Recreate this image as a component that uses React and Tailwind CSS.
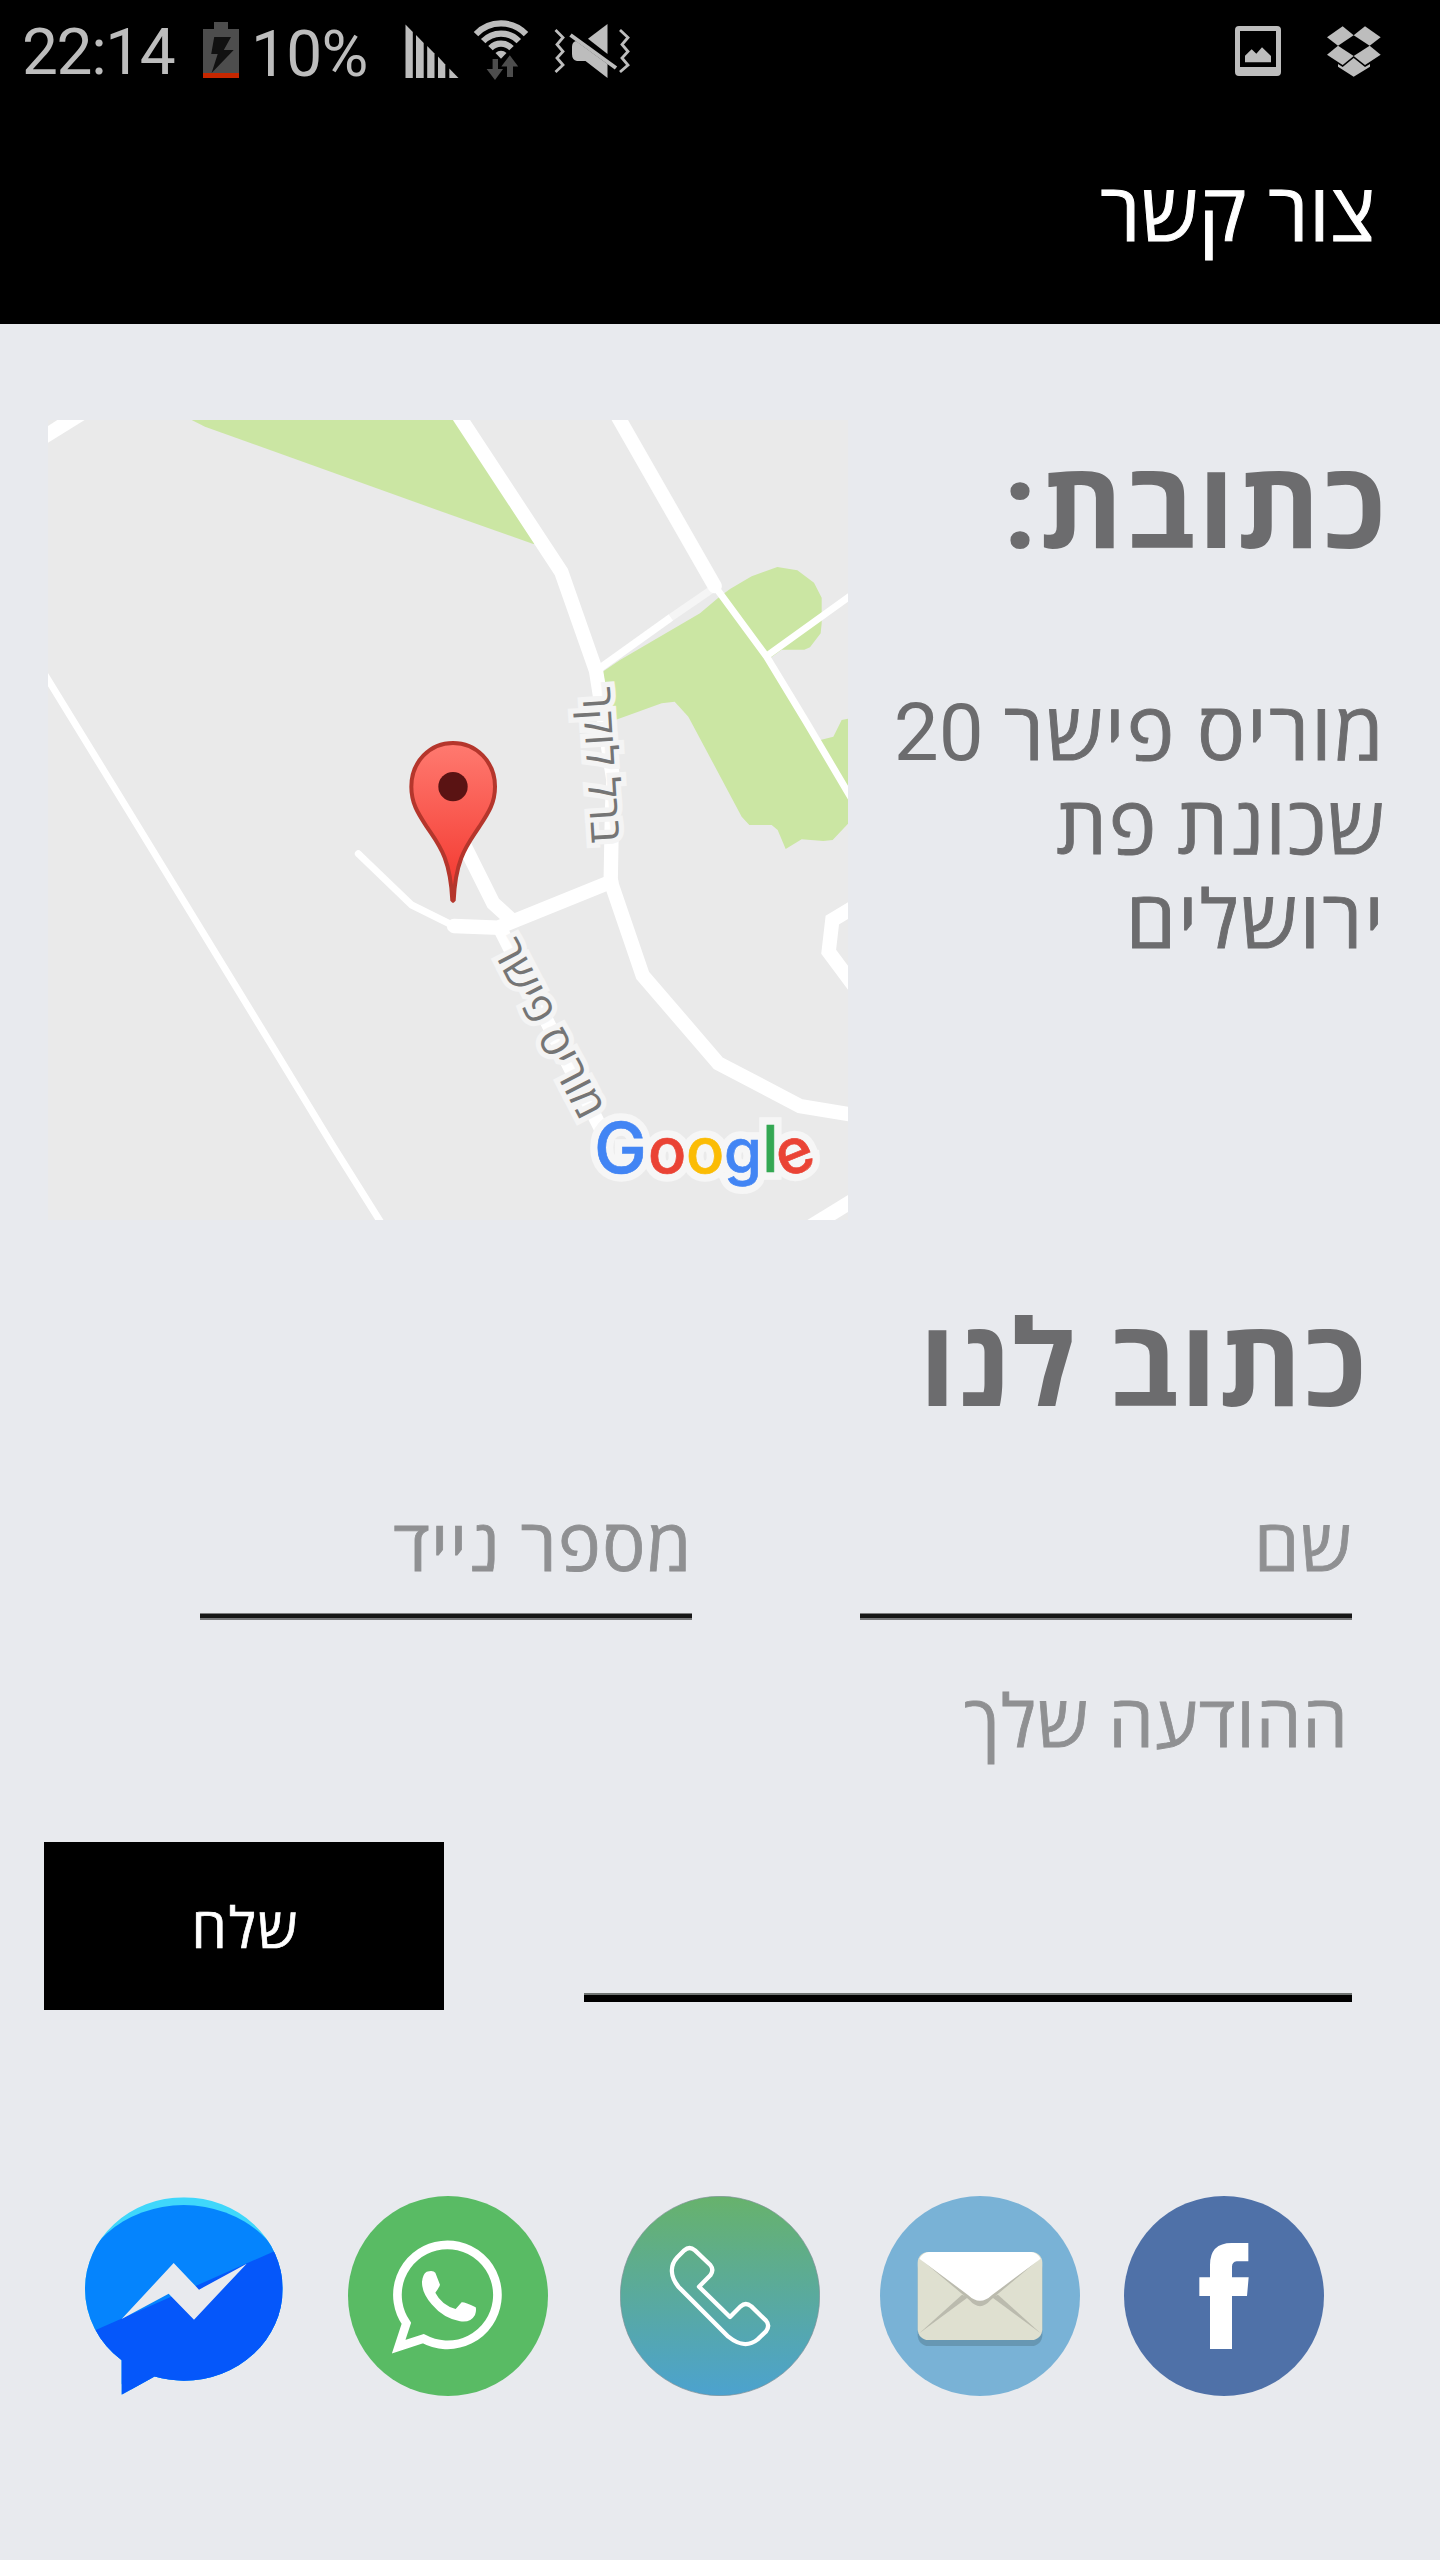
const FONT = "font-['Roboto','Open_Sans',sans-serif]";

function Battery() {
  return (
    <svg className="h-[105px] w-9" viewBox="203 0 36 105">
      <path d="M214 22h14v7h11v49h-36V29h11z" fill="#4d4d4d" />
      <rect x="203" y="73" width="36" height="5" fill="#c62700" />
      <path d="M214.2 37H231L223.8 50H233.7L211.6 73L217.7 54H211.2Z" fill="#111" />
    </svg>
  );
}

function Signal() {
  return (
    <svg className="h-[105px] w-[54px]" viewBox="405 0 54 105" fill="#bdbdbd">
      <path d="M405.5 24.5L412.8 32V78H405.5Z" />
      <path d="M416 35L423.7 43V78H416Z" />
      <path d="M427.2 46L434.5 53.5V78H427.2Z" />
      <path d="M438 56.5L445.3 64.5V78H438Z" />
      <path d="M449.3 68.5L458.5 78H449.3Z" />
    </svg>
  );
}

function Wifi() {
  return (
    <svg className="h-[105px] w-14" viewBox="473 0 56 105">
      <g fill="none" stroke="#bdbdbd" strokeWidth="6.2">
        <path d="M476 34.2A34.5 34.5 0 0 1 526 34.2" />
        <path d="M483.2 41.2A24.5 24.5 0 0 1 518.8 41.2" />
        <path d="M490.5 48.2A14.5 14.5 0 0 1 511.5 48.2" />
      </g>
      <path d="M495.5 53A8 8 0 0 1 506.5 53L501 58.8Z" fill="#bdbdbd" />
      <path d="M492.6 59H498V69H503L495 80L486.6 69H492.6Z" fill="#4d4d4d" />
      <path d="M509.8 55.3L518.2 66.5H513V77H507V66.5H501.3Z" fill="#4d4d4d" />
    </svg>
  );
}

function Muted() {
  return (
    <svg className="h-[105px] w-[78px]" viewBox="553 0 78 105">
      <g fill="none" stroke="#bdbdbd" strokeWidth="2.8">
        <path d="M555.5 30L563 37.5L557 44.5L563 51.5L557 58L563 65L555.5 72" />
        <path d="M620 30L628 37.5L622 44.5L628 51.5L622 58L628 65L620 72" />
      </g>
      <path d="M570.5 35L616 68" stroke="#bdbdbd" strokeWidth="4" />
      <g fill="#bdbdbd">
        <path d="M607.5 24V54L588 38.7Z" />
        <path d="M576 41L607.5 64V78L585.5 61H577Q572 60 572 54V47Q572 42 576 41Z" />
      </g>
    </svg>
  );
}

function Picture() {
  return (
    <svg className="h-[105px] w-[46px]" viewBox="525 0 138 315">
      <path
        d="M537 78H651Q663 78 663 90V216Q663 228 651 228H537Q525 228 525 216V90Q525 78 537 78ZM540 93V201H648V93Z"
        fill="#bdbdbd"
        fillRule="evenodd"
      />
      <path d="M555 187V167L575 148L589 161L606 142L633 168V187Z" fill="#bdbdbd" />
    </svg>
  );
}

function Dropbox() {
  return (
    <svg className="h-[105px] w-[54px]" viewBox="801 0 162 315" fill="#bdbdbd">
      <path d="M848 79L881 106L834 137L801 112Z" />
      <path d="M915 79L962 112L929 137L881 106Z" />
      <path d="M834 137L881 168L848 195L801 164Z" />
      <path d="M929 137L962 164L915 195L881 168Z" />
      <path d="M881 174L915 201L930 192V200L881 230L834 200V192L848 201Z" />
    </svg>
  );
}

function MapView() {
  const label = {
    fill: "#757575",
    stroke: "#f4f4f4",
    strokeWidth: 32,
    paintOrder: "stroke",
    textAnchor: "middle",
    direction: "rtl",
  };
  const letters = [
    ["G", 462, 2288, "#4285f4", 212, 0],
    ["o", 624, 2288, "#ea4335", 190, 0],
    ["o", 738, 2288, "#fbbc05", 190, 0],
    ["g", 852, 2288, "#4285f4", 184, 0],
    ["l", 967, 2287, "#34a853", 194, 0],
    ["e", 1009, 2290, "#ea4335", 188, -22],
  ];
  return (
    <svg className="size-[800px] shrink-0" viewBox="-1176 30 2400 2400">
      <defs>
        <linearGradient id="pin" x1="0" y1="0" x2="0" y2="1">
          <stop offset="0" stopColor="#ff7a70" />
          <stop offset="0.9" stopColor="#f43b32" />
        </linearGradient>
      </defs>
      <rect x="-1176" y="30" width="2400" height="2400" fill="#eaeaea" />
      <g fill="#cbe6a3">
        <path d="M-745 30L-705 50L0 303L280 402L310 402L70 30Z" />
        <path d="M488 785L540 750L780 610L835 563L870 537L935 499L1012 471L1072 481L1122 518L1145 563V640L1142 670L1110 712L1093 719H1025L990 745L1000 760L1100 920L1141 990L1180 980L1205 930L1224 926V1241L1178 1290L1150 1293L1085 1288L1037 1317L1013 1260L995 1245H928L905 1220L745 920L704 875L665 880L520 932Z" />
      </g>
      <g fill="#fff">
        <path d="M-1176 48L-1148 30H-1066L-1176 98Z" />
        <path d="M1102 2430L1224 2355V2406L1185 2430Z" />
      </g>
      <path d="M693 622L820 535" stroke="#f5f5f5" strokeWidth="23" />
      <g fill="none" stroke="#fff" strokeWidth="21" strokeLinecap="round">
        <path d="M-1190 786L-936 1200L-490 1930L-320 2210L-168 2452" />
        <path d="M824 528L980 740L1100 938L1240 1175" />
        <path d="M980 738L1240 551" />
        <path d="M-245 1331L-85 1485L42 1548" />
      </g>
      <path d="M478 776L693 622" stroke="#fff" strokeWidth="23" />
      <g fill="none" stroke="#fff" strokeWidth="43" strokeLinecap="round">
        <path d="M50 8L364 486L468 782L520 1110L516 1200L512 1415L608 1696L835 1960L1080 2088L1250 2116" />
        <path d="M525 5L824 528" />
        <path d="M514 1415L210 1538L175 1553L42 1548" />
        <path d="M50 1260L160 1480L215 1530" />
        <path d="M180 1555L500 2190" />
        <path d="M1260 1480L1177 1530L1166 1625L1260 1752" />
      </g>
      <g className="font-['Open_Sans'] font-medium" fontSize="130">
        <text transform="translate(441 1067) rotate(86.5)" {...label}>ברל לוקר</text>
        <text transform="translate(288 1875) rotate(62.7)" {...label}>מוריס פישר</text>
      </g>
      <path
        d="M39 999C-30 999 -86 1055 -86 1130C-86 1180 -66 1210 -40 1250C-5 1303 31 1340 37 1472H41C47 1340 84 1303 118 1250C144 1210 165 1180 165 1130C165 1055 108 999 39 999Z"
        fill="url(#pin)"
        stroke="#b5362c"
        strokeWidth="12"
        strokeLinejoin="bevel"
      />
      <circle cx="39" cy="1130" r="44" fill="#5a1313" />
      <g className="font-['Inter'] font-medium">
        {["halo", "face"].map((layer) =>
          letters.map(([ch, x, y, color, size, turn], i) => (
            <text
              key={layer + i}
              transform={`translate(${x} ${y}) rotate(${turn} 54 -52)`}
              fontSize={size}
              fill={layer === "halo" ? "#f6f6f6" : color}
              stroke={layer === "halo" ? "#f6f6f6" : color}
              strokeWidth={layer === "halo" ? 46 : 2}
            >
              {ch}
            </text>
          ))
        )}
      </g>
    </svg>
  );
}

function Messenger() {
  return (
    <svg className="size-[200px]" viewBox="72 78 600 600">
      <defs>
        <clipPath id="bubble">
          <ellipse cx="371.5" cy="357" rx="296.5" ry="275" />
          <path d="M185 540V674L285 619L320 560Z" />
        </clipPath>
      </defs>
      <g clipPath="url(#bubble)">
        <rect x="72" y="78" width="600" height="600" fill="#3fd7fb" />
        <ellipse cx="371" cy="400" rx="328" ry="295" fill="#0584fd" />
        <path d="M60 501L690 223V690H60Z" fill="#0557fa" />
      </g>
      <path d="M185 447L341 279L417 359L560 281L402 449L326 371Z" fill="#e8eaee" />
    </svg>
  );
}

function WhatsApp() {
  return (
    <svg className="size-[200px]" viewBox="864 78 600 600">
      <circle cx="1164" cy="378" r="300" fill="#59bb64" />
      <path
        d="M1039 460L1016 530L1090 506A150 150 0 1 0 1039 460Z"
        fill="none"
        stroke="#fff"
        strokeWidth="26"
      />
      <path
        d="M1100 305Q1120 300 1126 308L1140 344Q1138 352 1126 368Q1145 405 1187 417L1205 397Q1212 395 1247 412Q1250 420 1245 435Q1232 459 1200 454Q1150 445 1115 403Q1085 368 1086 335Q1088 312 1100 305Z"
        fill="#fff"
      />
    </svg>
  );
}

function Phone() {
  return (
    <svg className="size-[200px]" viewBox="90 78 600 600">
      <defs>
        <linearGradient id="call" x1="0" y1="0" x2="0" y2="1">
          <stop offset="0" stopColor="#67b26c" />
          <stop offset="1" stopColor="#4ca2cf" />
        </linearGradient>
      </defs>
      <circle cx="390" cy="378" r="299" fill="url(#call)" stroke="#7d9095" strokeWidth="2" />
      <path
        d="M283 241Q298 227 315 241L361 285Q373 300 361 316L327 350L420 441L452 409Q467 395 484 409L528 452Q541 467 528 484L503 508C473 532 445 524 415 500L265 350C242 320 238 288 262 262Z"
        fill="none"
        stroke="#fff"
        strokeWidth="13"
        strokeLinejoin="round"
      />
    </svg>
  );
}

function Mail() {
  return (
    <svg className="size-[200px]" viewBox="870 78 600 600">
      <circle cx="1170" cy="378" r="300" fill="#79b2d6" />
      <rect x="983" y="264" width="374" height="264" rx="32" fill="#6797b3" />
      <rect x="983" y="246" width="374" height="264" rx="32" fill="#dfe0d0" />
      <path d="M988 490L1116 374L1134 382Z" fill="#bbbbae" />
      <path d="M1352 490L1224 374L1206 382Z" fill="#bbbbae" />
      <path d="M988 264L1138 390Q1170 427 1202 390L1352 264L1300 260H1040Z" fill="#bbbbae" />
      <path d="M988 266Q1000 246 1017 246H1323Q1340 246 1352 266L1206 375Q1170 410 1134 375Z" fill="#fff" />
    </svg>
  );
}

function Facebook() {
  return (
    <svg className="size-[200px]" viewBox="102 78 600 600">
      <circle cx="402" cy="378" r="300" fill="#4f71a8" />
      <path
        d="M360 537V378H328V322H360V285Q360 219 425 219H475V274H440Q426 276 426 290V322H476L471 378H426V537Z"
        fill="#fff"
      />
    </svg>
  );
}

function Field({ label }) {
  return (
    <div className="flex h-[116px] w-[492px] flex-col justify-between">
      <div className="-mr-px text-[72px] leading-[85px] tracking-[1.5px] text-[#8f9092] [-webkit-text-stroke:0.8px_currentColor]">{label}</div>
      <div className="h-[7px] border-t border-b-2 border-t-[#7c7d7e] border-b-[#77787a] bg-[#161616]" />
    </div>
  );
}

export default function App() {
  return (
    <div dir="rtl" className={`flex h-[2560px] w-[1440px] flex-col overflow-hidden bg-[#e8eaee] ${FONT}`}>
      <header className="h-[324px] bg-black">
        <div dir="ltr" className="flex h-[105px] items-start pl-[22px] pr-[59px] text-[64px] leading-[105px] text-[#bdbdbd]">
          <span className="w-[181px] whitespace-nowrap tracking-[-1.4px]">22:14</span>
          <Battery />
          <span className="ml-[12px] w-[154px] whitespace-nowrap pt-[2px] tracking-[-0.7px]">10%</span>
          <Signal />
          <div className="ml-[14px]"><Wifi /></div>
          <div className="ml-6"><Muted /></div>
          <div className="ml-auto"><Picture /></div>
          <div className="ml-[46px]"><Dropbox /></div>
        </div>
        <h1 className="mt-[62px] pr-16 text-[80px] leading-[94px] tracking-[1px] text-white [-webkit-text-stroke:1px_currentColor]">צור קשר</h1>
      </header>

      <section dir="ltr" className="mt-24 flex h-[800px] pl-12 pr-[56px]">
        <MapView />
        <div dir="rtl" className="flex-1 whitespace-nowrap text-[#6c6c6e]">
          <h2 className="-mr-[4px] mt-[17px] text-[120px] leading-[140px] font-bold tracking-[2.5px]">כתובת:</h2>
          <address className="-mr-[2px] mt-[109px] text-[80px] leading-[94px] not-italic [-webkit-text-stroke:0.9px_currentColor]">
            <p className="tracking-[2.4px] [word-spacing:-2px]">מוריס פישר <span className="tracking-normal [-webkit-text-stroke:0]">20</span></p>
            <p className="tracking-[1.6px] [word-spacing:-2px]">שכונת פת</p>
            <p className="tracking-[2.3px]">ירושלים</p>
          </address>
        </div>
      </section>

      <h2 className="mt-[75px] pr-[72px] text-[120px] leading-[140px] font-bold tracking-[1.7px] text-[#6c6c6e]">כתוב לנו</h2>

      <div className="mt-[69px] flex gap-[168px] pr-[88px]">
        <Field label="שם" />
        <Field label="מספר נייד" />
      </div>

      <div className="mt-[60px] flex h-[330px] justify-between pr-[88px] pl-11">
        <div className="flex h-[322px] w-[768px] flex-col justify-between">
          <div className="pr-[3px] text-[72px] leading-[85px] tracking-[1.3px] text-[#8f9092] [-webkit-text-stroke:0.8px_currentColor]">ההודעה שלך</div>
          <div className="h-[9px] border-t-2 border-t-[#6f7472] bg-black" />
        </div>
        <button className="mt-[162px] flex h-[168px] w-[400px] items-center justify-center bg-black pt-[6px] pl-[3px] text-[56px] tracking-[2px] text-white [-webkit-text-stroke:0.7px_currentColor]">
          שלח
        </button>
      </div>

      <nav dir="ltr" className="mt-[186px] flex pl-[84px]">
        <Messenger />
        <div className="ml-16"><WhatsApp /></div>
        <div className="ml-[72px]"><Phone /></div>
        <div className="ml-[60px]"><Mail /></div>
        <div className="ml-11"><Facebook /></div>
      </nav>
    </div>
  );
}
